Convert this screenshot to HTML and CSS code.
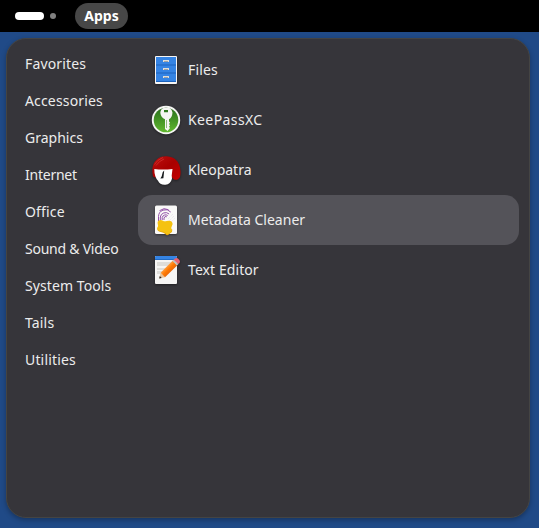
FILE: index.html
```html
<!DOCTYPE html>
<html lang="en">
<head>
<meta charset="utf-8">
<title>Apps</title>
<link rel="stylesheet" href="styles.css">
</head>
<body>
<header class="topbar">
  <div class="workspaces"><span class="current"></span><span class="dot"></span></div>
  <button class="apps-button">Apps</button>
</header>
<main class="menu">
  <nav class="categories">
    <a class="loose">Favorites</a>
    <a class="loose">Accessories</a>
    <a>Graphics</a>
    <a class="tight">Internet</a>
    <a class="loose">Office</a>
    <a class="tight">Sound &amp; Video</a>
    <a class="slightly-loose">System Tools</a>
    <a class="loose">Tails</a>
    <a class="loose">Utilities</a>
  </nav>
  <ul class="apps">
    <li class="app">
      <svg class="icon" viewBox="0 0 32 32">
        <rect x="5" y="2" width="22" height="28" rx="1" fill="#f6f5f4"/>
        <path fill="#3584e4" d="M6 3h20v25H6z"/>
        <path fill="#1c63bd" d="M6 10.600h20v.8H6zM6 18.600h20v.8H6zM6 27h20v1H6z"/>
        <path fill="#deddda" d="M13 6h6v2h-6zM13 14h6v2h-6zM13 22h6v2h-6z"/>
        <path fill="#8b8e91" d="M14 7h4v.8h-4zM14 15h4v.8h-4zM14 23h4v.8h-4z"/>
      </svg>
      <span class="loose">Files</span>
    </li>
    <li class="app">
      <svg class="icon" viewBox="0 0 32 32">
        <defs><linearGradient id="green" x1="0" y1="0" x2="0" y2="1"><stop offset="0" stop-color="#286f1c"/><stop offset="1" stop-color="#61b82f"/></linearGradient></defs>
        <circle cx="16" cy="16" r="14.200" fill="#f5f5f3"/>
        <circle cx="16" cy="16" r="12.300" fill="url(#green)"/>
        <path fill="#f5f5f3" fill-rule="evenodd" d="M12.500 4h7q2.500 1 3 4.500-.3 5-3.500 6.800v2.200l1 1-1 1.400 1 1.300-1 1.600 1 1.300-2.400 3-2.600-2V15.300q-4.200-1.800-4.700-6.500.2-3.600 3.200-4.800zM14 6v2.300h4V6z"/>
        <path stroke="#78a963" stroke-width=".8" d="M16.500 16v8"/>
      </svg>
      <span class="wide">KeePassXC</span>
    </li>
    <li class="app">
      <svg class="icon" viewBox="0 0 32 32">
        <defs><linearGradient id="hair" x1="0" y1="0" x2="1" y2="1"><stop offset="0" stop-color="#bd1010"/><stop offset=".5" stop-color="#a80000"/><stop offset="1" stop-color="#c40000"/></linearGradient></defs>
        <path fill="url(#hair)" d="M3 22.500C1.500 15 2.500 8.500 8 4.500C12 1.500 20 1.300 25 5c5 4 6.500 11 5 18-1.500 2.800-4 3.300-6 2.500l-2-2H5z"/>
        <path fill="#fff" d="M4.300 15Q13 16.200 22.500 15l-.8 6.500.3 3q-1.500 6-6.500 6.300-5.500.5-7.500-4-3.700-4-3.700-11.800z"/>
        <path fill="#16191c" d="M14.200 16.500l-.8 7.700-3 .3 1.300-2.200 1-4z"/>
        <path fill="none" stroke="#d8423d" stroke-width=".6" d="M4.500 10.500q3-5 8.500-7M6 11.500q3-4.500 8-6.500"/>
      </svg>
      <span>Kleopatra</span>
    </li>
    <li class="app selected">
      <svg class="icon" viewBox="0 0 32 32">
        <rect x="5" y="1.500" width="22" height="28.500" rx="1.500" fill="#faf9f8"/>
        <g fill="none" stroke="#9252a8" stroke-width="1">
          <path d="M8.500 17v-4.500a7 7 0 0 1 12.200-4.500M10.300 16.500v-3.500a5.300 5.300 0 0 1 8.800-3M12.200 16v-2.500a3.600 3.600 0 0 1 5.500-2M14 16v-2a2 2 0 0 1 2.800-1.200M9.500 6.700q4.500-3.500 9-1"/>
        </g>
        <path stroke="#ddd4e2" stroke-width=".7" stroke-dasharray="1 1" d="M18 15l5-5M19 17l5-5M21 18l4-4"/>
        <path fill="#e5a50a" d="M7.300 23.500q-.5 4.300 3.500 4.400 3 .2 4.500 2.100 1.700 2 3.200.8l2-1.700q2.200-1.300 1.800-3.600z"/>
        <path fill="#f5c211" d="M9.500 16.200q1.800-.6 3.500.6 1.700 1 3.700.2 3.500-1 5.300.9 1.500 2-.2 4.300-1.200 1.700 0 3.300 1 1.700-.8 2.600l-2 1.600q-2 1.200-3.300-.5-2-1.900-5-2-3.600-.3-3.200-3.500 1.100-2.200.2-4-.5-2.700 1.800-3.500z"/>
      </svg>
      <span>Metadata Cleaner</span>
    </li>
    <li class="app">
      <svg class="icon" viewBox="0 0 32 32">
        <defs><linearGradient id="pencil" x1="0" y1="0" x2="1" y2="1"><stop offset=".3" stop-color="#ffad58"/><stop offset=".5" stop-color="#ff7800"/><stop offset=".7" stop-color="#df6210"/></linearGradient></defs>
        <rect x="5" y="2" width="22" height="28" rx="1" fill="#f6f5f4"/>
        <path fill="#3584e4" d="M6 2h20q1 0 1 1v3H5V3q0-1 1-1z"/>
        <path fill="#1f67bd" d="M5 5.200h22v.8H5z"/>
        <path fill="#deddda" d="M7 8h16v4H7zM7 14h13v2H7zM7 17h10v3H7z"/>
        <path fill="#e7c39a" d="M9.200 24.500l1.400-5.700 4.400 4.400z"/>
        <path fill="url(#pencil)" d="M10.600 18.800L22.800 6.600l4.600 4.600L15 23.200z"/>
        <path fill="#c0c0bf" d="M22.400 7l1.600-1.500 4.500 4.400-1.600 1.600z"/>
        <path fill="#e96270" d="M23.700 5.800L25 4.600q1.800-1.300 3.700.6 2 2 .8 3.700l-1.200 1.200z"/>
        <path fill="#222" d="M9.200 24.500l.6-2.500 1.900 1.900z"/>
      </svg>
      <span class="slightly-loose">Text Editor</span>
    </li>
  </ul>
</main>
</body>
</html>
```
FILE: styles.css
```css
* { box-sizing: border-box; }
body {
  margin: 0;
  height: 528px;
  display: flex;
  flex-direction: column;
  overflow: hidden;
  background: #204a87;
  color: #ececec;
  font: 14px/20px "Noto Sans", sans-serif;
}
.topbar {
  height: 32px;
  flex: none;
  display: flex;
  align-items: center;
  padding-left: 15px;
  background: #000;
}
.workspaces { display: flex; align-items: center; gap: 6px; width: 60px; }
.current { width: 29px; height: 8px; border-radius: 4px; background: #fff; }
.dot { width: 6px; height: 6px; border-radius: 50%; background: #808080; }
.apps-button {
  width: 53px;
  height: 26px;
  padding: 0;
  border: 0;
  border-radius: 13px;
  background: #474747;
  color: #fff;
  font: 700 14px/26px "Noto Sans", sans-serif;
}
.menu {
  width: 524px;
  height: 480px;
  margin: 6px 0 0 6px;
  display: flex;
  border: 1px solid #444443;
  border-radius: 20px;
  background: #36353a;
  box-shadow: 0 2px 5px rgba(0, 0, 0, .3);
}
.categories {
  width: 131px;
  padding: 6px 0 0 18px;
  display: flex;
  flex-direction: column;
}
.categories a { height: 37px; line-height: 37px; white-space: nowrap; }
.apps { width: 381px; margin: 0; padding: 6px 0 0; list-style: none; }
.app {
  height: 50px;
  padding-left: 12px;
  display: flex;
  align-items: center;
  gap: 6px;
  border-radius: 14px;
}
.selected { background: #545359; }
.icon { width: 32px; height: 32px; filter: drop-shadow(0 1px 1px rgba(0, 0, 0, .4)); }
.loose { letter-spacing: .16px; }
.slightly-loose { letter-spacing: .08px; }
.wide { letter-spacing: .4px; }
.tight { letter-spacing: -.24px; }
```
